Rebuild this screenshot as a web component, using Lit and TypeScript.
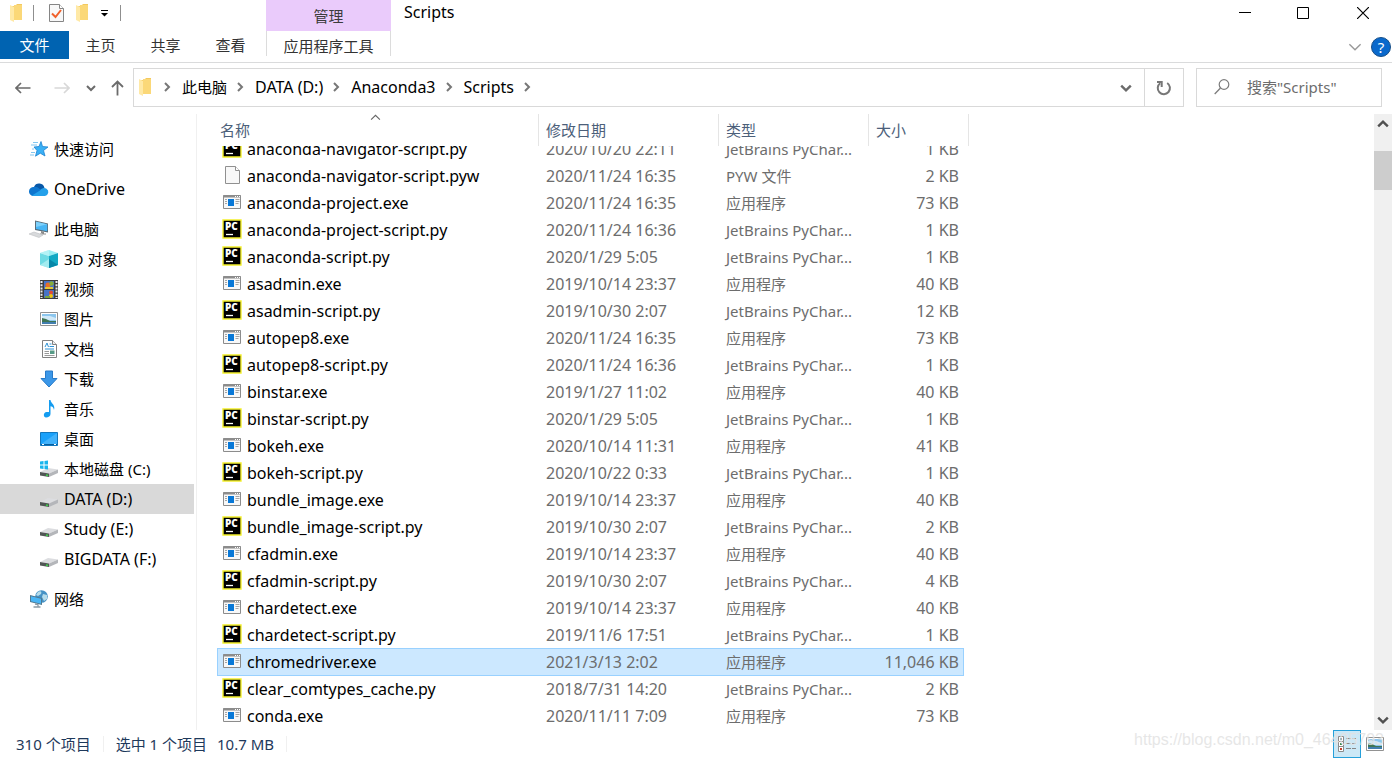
import { LitElement, html, css, svg } from "lit";
import { customElement } from "lit/decorators.js";
import { classMap } from "lit/directives/class-map.js";

const icon = (w: number, h: number, body: unknown) =>
  html`<svg width=${w} height=${h} viewBox="0 0 ${w} ${h}" aria-hidden="true">${body}</svg>`;

const folder = icon(13, 18, svg`
  <path d="M0 2h5l2-2h5v16H0z" fill="#f3c95f"/><path d="M4 1h8v15H4z" fill="#fbd878"/>
  <path d="M0 1l4 2v15l-4-2z" fill="#ffe9a6"/>`);
const checkDoc = icon(15, 18, svg`
  <path d="M.5.5h10l4 4v13H.5z" fill="#f8f8f8" stroke="#858585"/><path d="M10.500 .5v4h4" fill="#fff" stroke="#858585"/>
  <path d="M3 9.500l3.500 3.500 5.500-7" fill="none" stroke="#f0602a" stroke-width="2"/>`);
const overflow = icon(7, 7, svg`<path d="M0 .5h7" stroke="#000"/><path d="M0 3h7L3.500 6.500z"/>`);

const chevron = (dir: string, size: number, color: string, width = 2) => {
  const paths: Record<string, string> = {
    right: "M2 1l4 4-4 4", down: "M1 3l4 4 4-4", up: "M1 7l4-4 4 4",
  };
  return html`<svg width=${size} height=${size} viewBox="0 0 10 10" aria-hidden="true">
    <path d=${paths[dir]} fill="none" stroke=${color} stroke-width=${width}/></svg>`;
};
const back = icon(16, 12, svg`<path d="M15.500 6H1M6 1L1 6l5 5" fill="none" stroke="#6b6b6b" stroke-width="1.700"/>`);
const forward = icon(16, 12, svg`<path d="M.5 6H15M10 1l5 5-5 5" fill="none" stroke="#d8d8d8" stroke-width="1.700"/>`);
const upArrow = icon(13, 16, svg`<path d="M6.500 15.500V1.500M1 7l5.500-5.500L12 7" fill="none" stroke="#6b6b6b" stroke-width="1.800"/>`);
const refresh = icon(16, 16, svg`<path d="M11.200 3a6.100 6.100 0 1 1-7 .2" fill="none" stroke="#777" stroke-width="2"/><path d="M1 2h4.700v5" fill="none" stroke="#777" stroke-width="2"/>`);
const magnifier = icon(16, 16, svg`<circle cx="10" cy="5.500" r="4.800" fill="none" stroke="#7c7c7c" stroke-width="1.200"/><path d="M6.500 9L.7 15" stroke="#7c7c7c" stroke-width="1.300"/>`);

const star = icon(20, 18, svg`
  <path d="M12 1.500l1.500 5 5.500 .5-4.500 3.500 1.500 5.500-4.700-2.800-4.800 3 1.500-5.700-3-3.500 5-.5z" fill="#3ab0f5" stroke="#1c82d1" stroke-width=".8"/>
  <path d="M4 2.500h5M2 5h6M3 9h2M2 12.500h4M1 15h4" stroke="#82c6f0"/>`);
const cloud = icon(20, 13, svg`
  <path d="M5 4a5.500 5.500 0 0 1 10.500 1L11 8z" fill="#0858a8"/><path d="M4 13a4.300 4.300 0 0 1 1-9c2-.5 4 .5 5 1.500L16 9l-8 4z" fill="#0f76cf"/>
  <path d="M3 12.500L11 7.500C13 5 15.500 4.500 17.500 5.700a4 4 0 0 1-1.500 7.300H4z" fill="#24a0ea"/>`);
const computer = icon(20, 18, svg`
  <path d="M6 .5l13 3v9L6 10z" fill="#5a6c78"/><path d="M7 1.700l11.200 2.600v7L7 9z" fill="#48b5f4"/><path d="M7 1.700l11.200 2.600L7 7z" fill="#7dd0fa"/>
  <path d="M12 11l3 .8v2l-3-.8zM11 13.500h6v1h-6z" fill="#8c8c8c"/><path d="M0 14l5-2 9 3-4 2.500z" fill="#d8dadc" stroke="#bdc0c3" stroke-width=".6"/>`);
const cube = icon(18, 18, svg`
  <path d="M9 0l9 3-9 3-9-3z" fill="#9aeef3"/><path d="M0 3l9 3v12l-9-3z" fill="#6fdbe4"/><path d="M18 3L9 6v12l9-3z" fill="#13a9c4"/>
  <path d="M0 15l9-6v9zM0 3l9-3v6z" fill="#c6f7f8" opacity=".6"/><path d="M9 9l9 6-9 3z" fill="#0787a8"/>`);
const film = icon(18, 19, svg`
  <path d="M0 0h18v19H0z" fill="#3c3c3c"/><path d="M4 1h10v8H4zM4 10h10v8H4z" fill="#4773c7"/>
  <path d="M1.500 1v17M16.500 1v17" stroke="#ececec" stroke-width="2" stroke-dasharray="2 1.200"/>
  <circle cx="8" cy="5" r="2.500" fill="#e96e28"/><circle cx="11.500" cy="3.500" r="2.200" fill="#86ad38"/><path d="M5 7h8v2H5z" fill="#e6c733"/>
  <circle cx="11" cy="12.500" r="2" fill="#e34c34"/><circle cx="11" cy="16" r="2" fill="#f1c40f"/><path d="M5 17h5" stroke="#79a340" stroke-width="2"/>`);
const picture = icon(18, 14, svg`
  <path d="M.5.5h17v13H.5z" fill="#fff" stroke="#929292"/><path d="M2 2h14v10H2z" fill="#8cc6ee"/><path d="M2 4h8l6 2v2H2z" fill="#d1e9f8"/>
  <path d="M2 6l4 1 4 2h6v1H2z" fill="#3f7555"/><path d="M2 10h14v2H2z" fill="#417eaf"/>`);
const documentIcon = icon(15, 18, svg`
  <path d="M.5.5h10l4 4v13H.5z" fill="#fff" stroke="#818181"/><path d="M10.500 .5v4h4" fill="#eee" stroke="#818181"/>
  <path d="M3 7l2-4 1.500 4M7.500 4h2M7.500 6.500H12M3 9h9" fill="none" stroke="#2f93d6"/><path d="M2.500 11.500H7M2.500 13.500H7M2.500 15.500h10" stroke="#9a9a9a"/>
  <path d="M8 10.500h4.500V14H8z" fill="#579b87"/>`);
const download = icon(18, 18, svg`<path d="M5.500 1h7v7.500H17L9 17 1 8.500h4.500z" fill="#3b97e8" stroke="#287bc9"/>`);
const music = icon(12, 18, svg`
  <path d="M6 0h1.500c.5 4 5 4 3.500 10-.5-3-2-3.500-3.500-3.700V14c0 2-2 3.500-4.500 3.500S0 13.500 2.500 12.300c1-.5 2.500-.5 3.500-.2z" fill="#149cf0"/>`);
const desktop = icon(18, 14, svg`
  <path d="M.5.5h17v13H.5z" fill="#1aa1fa" stroke="#1377bd"/><path d="M1 12L17 1v11z" fill="#42b2fb"/><path d="M1 12.500h16" stroke="#075e9e"/><path d="M2 12.500h2M14 12.500h2" stroke="#fff"/>`);
const diskBody = svg`
  <path d="M0 12l8-4 10 1.500-9 4z" fill="#dcdde0"/><path d="M0 12l9 1.500V17l-9-1.500z" fill="#505654"/><path d="M9 13.500l9-4V13l-9 4z" fill="#b4b6ba"/><path d="M6 15l2 .4" stroke="#3ed148" stroke-width="1.500"/>`;
const disk = icon(18, 18, diskBody);
const systemDisk = icon(18, 18, svg`${diskBody}<path d="M0 1.500l3.500-.5v3.500H0zM4.500 .9L8 .5v4H4.500zM0 5.500h3.500V9L0 8.500zM4.500 5.500H8v4l-3.500-.4z" fill="#19b5ed"/>`);
const network = icon(18, 18, svg`
  <circle cx="11.500" cy="6.500" r="6.300" fill="#4692c5"/><path d="M8 2c3-2 4 0 3 2l-3 2-2-1zM13 4l4 1v4l-3 2-2-4z" fill="#b6dcea"/>
  <path d="M0 5l12 3v7L0 12z" fill="#507991"/><path d="M1 6.300l10 2.500v4.900L1 11.200z" fill="#49b5f5"/><path d="M5 14l3 .7v2.500M3.500 17h7" fill="none" stroke="#8b9aa5" stroke-width="1.300"/>`);

const exeIcon = icon(18, 14, svg`
  <path d="M.5.5h17v13H.5z" fill="#f8f8f8" stroke="#8c8c8c"/><path d="M0 1.500h18" stroke="#8c8c8c" stroke-width="2"/><path d="M12 1.500h1M14 1.500h1M16 1.500h1" stroke="#fff"/>
  <path d="M5 4h6v7H5z" fill="#0878d7"/><path d="M2 4.500h2M2 6.500h2M2 8.500h2M12.500 4.500h4M12.500 6.500h4M12.500 8.500h3" stroke="#a5a5a5"/>`);
const pyIcon = icon(20, 20, svg`
  <path d="M1 1h18v18H1z" fill="#000" stroke="#f4f02d" stroke-width="1.400"/>
  <text x="3" y="11" class="pc">PC</text><path d="M4 15.500h7" stroke="#fff" stroke-width="1.300"/>`);
const blankIcon = icon(15, 18, svg`<path d="M.5.5h10l4 4v13H.5z" fill="#f8f8f8" stroke="#909090"/><path d="M10.500 .5v4h4" fill="#fff" stroke="#909090"/>`);
const detailsIcon = icon(19, 16, svg`
  <path d="M.5.5h5v5h-5zM.5 5.500h5v5h-5zM.5 10.500h5v5h-5z" fill="#fff" stroke="#8a8a8a"/>
  <path d="M2 3h2" stroke="#345f86" stroke-width="2"/><path d="M2 8h2" stroke="#4c8a3b" stroke-width="2"/><path d="M2 13h2" stroke="#c6402a" stroke-width="2"/>
  <path d="M8 2.500h5M14 2.500h4M8 7.500h5M14 7.500h4M8 12.500h5M14 12.500h4" stroke="#868686"/>`);

type Place = { label: string; icon: unknown; child?: boolean; selected?: boolean };
const places: Place[][] = [
  [{ label: "快速访问", icon: star }],
  [{ label: "OneDrive", icon: cloud }],
  [
    { label: "此电脑", icon: computer },
    { label: "3D 对象", icon: cube, child: true },
    { label: "视频", icon: film, child: true },
    { label: "图片", icon: picture, child: true },
    { label: "文档", icon: documentIcon, child: true },
    { label: "下载", icon: download, child: true },
    { label: "音乐", icon: music, child: true },
    { label: "桌面", icon: desktop, child: true },
    { label: "本地磁盘 (C:)", icon: systemDisk, child: true },
    { label: "DATA (D:)", icon: disk, child: true, selected: true },
    { label: "Study (E:)", icon: disk, child: true },
    { label: "BIGDATA (F:)", icon: disk, child: true },
  ],
  [{ label: "网络", icon: network }],
];

const files: [string, string, string][] = [
  ["anaconda-navigator-script.py", "2020/10/20 22:11", "1 KB"],
  ["anaconda-navigator-script.pyw", "2020/11/24 16:35", "2 KB"],
  ["anaconda-project.exe", "2020/11/24 16:35", "73 KB"],
  ["anaconda-project-script.py", "2020/11/24 16:36", "1 KB"],
  ["anaconda-script.py", "2020/1/29 5:05", "1 KB"],
  ["asadmin.exe", "2019/10/14 23:37", "40 KB"],
  ["asadmin-script.py", "2019/10/30 2:07", "12 KB"],
  ["autopep8.exe", "2020/11/24 16:35", "73 KB"],
  ["autopep8-script.py", "2020/11/24 16:36", "1 KB"],
  ["binstar.exe", "2019/1/27 11:02", "40 KB"],
  ["binstar-script.py", "2020/1/29 5:05", "1 KB"],
  ["bokeh.exe", "2020/10/14 11:31", "41 KB"],
  ["bokeh-script.py", "2020/10/22 0:33", "1 KB"],
  ["bundle_image.exe", "2019/10/14 23:37", "40 KB"],
  ["bundle_image-script.py", "2019/10/30 2:07", "2 KB"],
  ["cfadmin.exe", "2019/10/14 23:37", "40 KB"],
  ["cfadmin-script.py", "2019/10/30 2:07", "4 KB"],
  ["chardetect.exe", "2019/10/14 23:37", "40 KB"],
  ["chardetect-script.py", "2019/11/6 17:51", "1 KB"],
  ["chromedriver.exe", "2021/3/13 2:02", "11,046 KB"],
  ["clear_comtypes_cache.py", "2018/7/31 14:20", "2 KB"],
  ["conda.exe", "2020/11/11 7:09", "73 KB"],
];
const kinds: Record<string, { type: string; icon: unknown }> = {
  py: { type: "JetBrains PyChar...", icon: pyIcon },
  pyw: { type: "PYW 文件", icon: blankIcon },
  exe: { type: "应用程序", icon: exeIcon },
};

// Purely Latin labels are set one pixel larger than Chinese ones, so both look the same size.
const isLatin = (text: string) => /^[\x00-\x7f]+$/.test(text);

const base = css`
  * { box-sizing: border-box; }
  button, input { font: inherit; color: inherit; border: 0; background: none; padding: 0; margin: 0; }
  button { display: flex; align-items: center; justify-content: center; white-space: nowrap; }
  svg { display: block; flex: none; }
  .latin { font-size: 16px; }
`;

@customElement("window-header")
export class WindowHeader extends LitElement {
  static styles = [base, css`
    :host { display: grid; grid-template-columns: 266px 125px 1fr auto; grid-template-rows: 31px 31px; border-bottom: 1px solid #dadbdc; }
    .quick { display: flex; align-items: center; padding: 0 0 5px 10px; gap: 12px; }
    .sep { width: 1px; height: 16px; background: #8f8f8f; }
    .quick .sep:first-of-type { margin: 0 3px 0 -2px; }
    .manage { display: grid; place-items: center; background: #eacbfb; color: #3c3c3c; }
    .title { margin: 0; font-size: 16px; font-weight: 400; line-height: 25px; padding-left: 13px; }
    .controls { display: flex; }
    .controls button { width: 58px; height: 25px; }
    .controls button.close { width: 60px; padding-left: 2px; }
    .tabs { display: flex; color: #333; }
    .tab { width: 65px; height: 28px; }
    .file { width: 69px; background: #0063b1; color: #fff; margin-right: -1px; }
    .tools { height: 25px; padding-top: 4px; color: #333; border: solid #dcdcdc; border-width: 0 1px; }
    .help { grid-column: 4; display: flex; justify-content: flex-end; align-items: center; gap: 9px; padding-right: 1px; }
    .round { width: 20px; height: 20px; border-radius: 50%; border: 1px solid #174f88; background: #0a69cc; color: #fff; }
  `];
  render() {
    return html`
      <div class="quick">
        ${folder}<span class="sep"></span>
        <button aria-label="属性">${checkDoc}</button>
        <button aria-label="新建文件夹">${folder}</button>
        <button aria-label="自定义快速访问工具栏">${overflow}</button>
        <span class="sep"></span>
      </div>
      <div class="manage">管理</div>
      <h1 class="title">Scripts</h1>
      <div class="controls">
        <button aria-label="最小化">${icon(12, 12, svg`<path d="M0 5.500h12" stroke="#000"/>`)}</button>
        <button aria-label="最大化">${icon(12, 12, svg`<path d="M.5.5h11v11H.5z" fill="none" stroke="#000"/>`)}</button>
        <button class="close" aria-label="关闭">${icon(12, 12, svg`<path d="M0 0l12 12M12 0L0 12" stroke="#000" stroke-width="1.200"/>`)}</button>
      </div>
      <div class="tabs">
        <button class="tab file">文件</button><button class="tab">主页</button><button class="tab">共享</button><button class="tab">查看</button>
      </div>
      <button class="tools">应用程序工具</button>
      <div class="help">
        <button aria-label="展开功能区">${chevron("down", 14, "#999", 1)}</button>
        <button class="round" aria-label="帮助">?</button>
      </div>`;
  }
}

@customElement("address-bar")
export class AddressBar extends LitElement {
  static styles = [base, css`
    :host { display: flex; align-items: center; padding: 5px 10px 7px 15px; }
    .history { display: flex; align-items: center; gap: 23px; width: 118px; }
    .recent { margin: 0 -8px 0 -7px; }
    .box { flex: 1; display: flex; height: 39px; border: 1px solid #d9d9d9; }
    .crumbs { flex: 1; display: flex; align-items: center; padding: 0 0 2px 5px; gap: 9px; }
    .crumbs svg:first-child { margin-right: 2px; }
    .drop { width: 38px; padding-left: 2px; }
    .refresh { width: 39px; border-left: 1px solid #d9d9d9; }
    .search { display: flex; align-items: center; width: 186px; height: 39px; margin-left: 12px; padding: 0 0 2px 17px; gap: 17px; border: 1px solid #d9d9d9; }
    input { flex: 1; min-width: 0; outline: 0; }
    input::placeholder { color: #6d6d6d; opacity: 1; }
  `];
  render() {
    return html`
      <div class="history">
        <button aria-label="后退">${back}</button>
        <button aria-label="前进" disabled>${forward}</button>
        <button class="recent" aria-label="最近浏览的位置">${chevron("down", 10, "#6b6b6b", 2)}</button>
        <button aria-label="向上">${upArrow}</button>
      </div>
      <div class="box">
        <nav class="crumbs" aria-label="地址">
          ${folder}${chevron("right", 10, "#777")}
          ${["此电脑", "DATA (D:)", "Anaconda3", "Scripts"].map((name) => html`<button class=${classMap({ latin: isLatin(name) })}>${name}</button>${chevron("right", 10, "#777")}`)}
        </nav>
        <button class="drop" aria-label="以前的位置">${chevron("down", 12, "#6b6b6b", 2)}</button>
        <button class="refresh" aria-label="刷新">${refresh}</button>
      </div>
      <label class="search">${magnifier}<input type="search" aria-label="搜索" placeholder='搜索"Scripts"'></label>`;
  }
}

@customElement("side-tree")
export class SideTree extends LitElement {
  static styles = [base, css`
    :host { display: block; width: 197px; padding: 20px 2px 0 0; border-right: 1px solid #f0f0f0; }
    nav { display: flex; flex-direction: column; gap: 10px; }
    ul { list-style: none; margin: 0; padding: 0; }
    a { display: flex; align-items: center; height: 30px; padding-left: 29px; gap: 5px; color: #000; text-decoration: none; white-space: nowrap; }
    .child { padding-left: 39px; }
    .selected { background: #d9d9d9; }
    .pic { width: 20px; display: flex; justify-content: center; }
  `];
  render() {
    return html`<nav aria-label="导航窗格">${places.map((group) => html`<ul>${group.map((p) => html`
      <li><a href="#" class=${classMap({ child: !!p.child, selected: !!p.selected, latin: isLatin(p.label) })}><span class="pic">${p.icon}</span>${p.label}</a></li>`)}</ul>`)}</nav>`;
  }
}

@customElement("file-list")
export class FileList extends LitElement {
  static styles = [base, css`
    :host { display: flex; min-height: 0; min-width: 0; overflow: hidden; padding-left: 20px; }
    table { display: flex; flex-direction: column; min-height: 0; flex: 1; }
    thead { display: block; }
    tbody { display: block; flex: 1; min-height: 0; overflow: hidden; }
    tr { display: grid; grid-template-columns: 321px 180px 150px 94px; width: 747px; height: 28px; margin-bottom: -1px; border: 1px solid transparent; }
    thead tr { grid-template-columns: 322px 180px 150px 100px; width: 752px; height: 32px; margin: 0; border: 0; }
    tbody tr:first-child { margin-top: -11px; }
    th { display: flex; position: relative; padding: 0 0 0 7px; border-right: 1px solid #e5e5e5; font-weight: 400; color: #4c607a; }
    th:first-child { padding-left: 3px; }
    .sort { position: absolute; top: -2px; left: 153px; }
    td { display: flex; align-items: center; padding: 0 0 0 7px; color: #6d6d6d; white-space: nowrap; }
    td:first-child { padding-left: 4px; gap: 5px; color: #000; }
    td:last-child { justify-content: flex-end; padding-right: 4px; }
    .selected { background: #cce8ff; border-color: #99d1ff; }
    .pic { width: 20px; display: flex; justify-content: center; padding-bottom: 2px; }
    .pc { font: 800 10px "Open Sans", sans-serif; fill: #fff; }
    .scroll { display: flex; flex-direction: column; width: 18px; background: #f0f0f0; }
    .scroll button { height: 20px; }
    .thumb { height: 39px; margin-top: 17px; background: #cdcdcd; }
    .rest { flex: 1; }
  `];
  render() {
    return html`
      <table>
        <thead><tr>
          <th><button>名称</button><span class="sort">${chevron("up", 11, "#666", 1)}</span></th>
          <th><button>修改日期</button></th><th><button>类型</button></th><th><button>大小</button></th>
        </tr></thead>
        <tbody>${files.map(([name, date, size]) => {
          const kind = kinds[name.split(".").pop()!];
          return html`<tr class=${classMap({ selected: name === "chromedriver.exe" })}>
            <td class="latin"><span class="pic">${kind.icon}</span>${name}</td><td class="latin">${date}</td><td>${kind.type}</td><td class="latin">${size}</td></tr>`;
        })}</tbody>
      </table>
      <div class="scroll">
        <button aria-label="向上滚动">${chevron("up", 12, "#505050", 2)}</button>
        <div class="thumb"></div><div class="rest"></div>
        <button aria-label="向下滚动">${chevron("down", 12, "#505050", 2)}</button>
      </div>`;
  }
}

@customElement("status-bar")
export class StatusBar extends LitElement {
  static styles = [base, css`
    :host { display: flex; align-items: center; height: 28px; padding: 0 3px 0 16px; color: #1e395b; position: relative; }
    .part { padding-right: 12px; margin-right: 12px; border-right: 1px solid #f0f0f0; line-height: 16px; }
    .size { margin-left: 10px; }
    .views { display: flex; margin-left: auto; }
    .view { width: 28px; height: 28px; }
    .active { background: #cce8f6; border: 1px solid #26a0da; }
    .mark { position: absolute; right: 8px; top: 0; line-height: 20px; font-family: "Liberation Sans", sans-serif; font-size: 16px; color: rgba(226, 226, 226, .85); pointer-events: none; }
  `];
  render() {
    return html`
      <span class="part">310 个项目</span>
      <span class="part">选中 1 个项目<span class="size">10.7 MB</span></span>
      <div class="views">
        <button class="view active" aria-label="详细信息">${detailsIcon}</button>
        <button class="view" aria-label="大缩略图">${picture}</button>
      </div>
      <span class="mark">https://blog.csdn.net/m0_46405793</span>`;
  }
}

@customElement("app-root")
export class AppRoot extends LitElement {
  static styles = [base, css`
    :host { display: flex; flex-direction: column; height: 100vh; overflow: hidden; background: #fff; color: #000; font: 15px/20px "Noto Sans", "Noto Sans CJK SC", sans-serif; }
    .body { flex: 1; min-height: 0; display: grid; grid-template-columns: auto 1fr; }
  `];
  render() {
    return html`
      <window-header></window-header>
      <address-bar></address-bar>
      <main class="body"><side-tree></side-tree><file-list></file-list></main>
      <status-bar></status-bar>`;
  }
}
